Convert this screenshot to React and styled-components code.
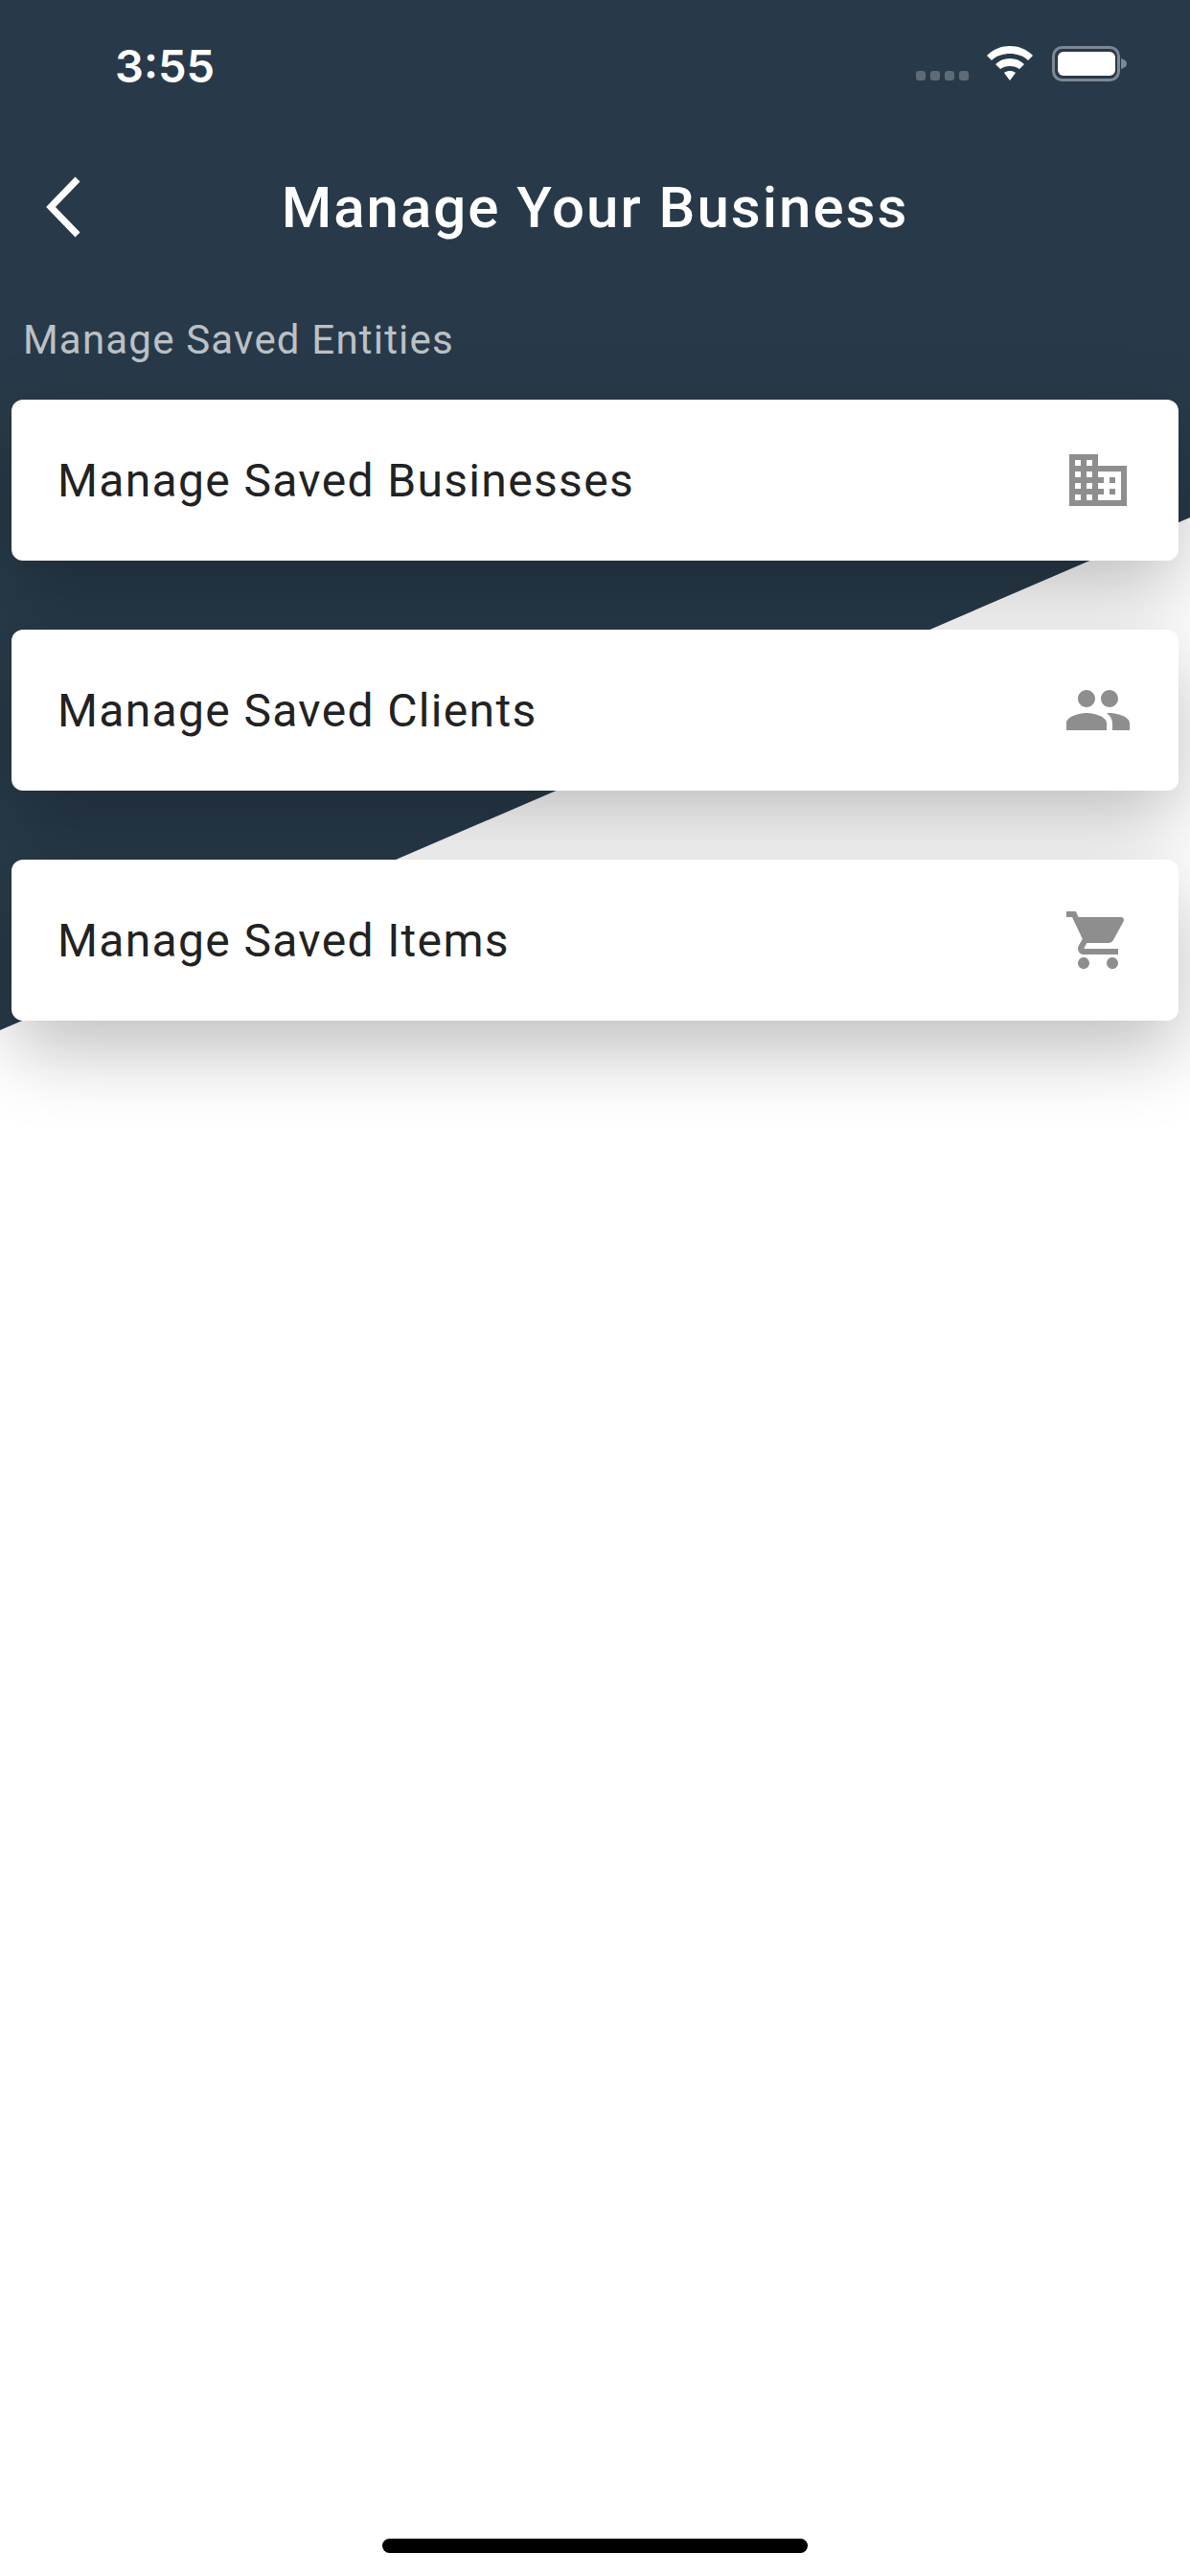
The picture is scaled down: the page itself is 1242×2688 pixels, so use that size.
import React from "react";
import styled, { createGlobalStyle } from "styled-components";
import { MdBusiness, MdPeople, MdShoppingCart } from "react-icons/md";

const GlobalStyle = createGlobalStyle`
  html, body {
    margin: 0;
    padding: 0;
    background: #fff;
  }
`;

const Page = styled.div`
  position: relative;
  width: 1242px;
  height: 2688px;
  overflow: hidden;
  background: #fff;
  font-family: Roboto, "Liberation Sans", sans-serif;

  &::before {
    content: "";
    position: absolute;
    inset: 0;
    background: #283a49;
    clip-path: polygon(0 0, 100% 0, 100% 540px, 0 1075px);
  }
`;

const Content = styled.div`
  position: relative;
  display: flex;
  flex-direction: column;
  height: 100%;
`;

const StatusBar = styled.div`
  display: flex;
  align-items: center;
  justify-content: space-between;
  height: 136px;
  padding: 0 64px 0 120px;
  box-sizing: border-box;
`;

const Time = styled.span`
  font-family: Inter, sans-serif;
  font-size: 47px;
  font-weight: 600;
  color: #fff;
`;

const NavBar = styled.div`
  position: relative;
  display: flex;
  align-items: center;
  justify-content: center;
  height: 160px;
`;

const BackButton = styled.svg`
  position: absolute;
  left: 45px;
  top: 47px;
  width: 42px;
  height: 66px;
`;

const Title = styled.h1`
  margin: 0;
  font-size: 60px;
  font-weight: 500;
  letter-spacing: 2px;
  color: #fff;
`;

const SectionLabel = styled.div`
  padding: 34px 0 0 24px;
  height: 121px;
  box-sizing: border-box;
  font-size: 42px;
  line-height: 50px;
  letter-spacing: 1.2px;
  color: rgba(255, 255, 255, 0.7);
`;

const List = styled.div`
  display: flex;
  flex-direction: column;
  gap: 72px;
  padding: 0 12px;
`;

const Card = styled.div`
  display: flex;
  align-items: center;
  justify-content: space-between;
  height: 168px;
  padding: 0 48px;
  box-sizing: border-box;
  background: #fff;
  border-radius: 12px;
  box-shadow: 0 30px 80px rgba(0, 0, 0, 0.26);
`;

const CardLabel = styled.span`
  font-size: 48px;
  letter-spacing: 1.35px;
  color: #222;
`;

const CardIcon = styled.span`
  display: flex;
  color: #8e8e8e;
  font-size: 72px;
`;

const HomeIndicator = styled.div`
  position: absolute;
  left: 399px;
  bottom: 24px;
  width: 444px;
  height: 15px;
  border-radius: 8px;
  background: #000;
`;

const items = [
  { label: "Manage Saved Businesses", icon: <MdBusiness /> },
  { label: "Manage Saved Clients", icon: <MdPeople /> },
  { label: "Manage Saved Items", icon: <MdShoppingCart /> },
];

const StatusIcons = () => (
  <svg width="222" height="40" viewBox="0 0 222 40">
    <g fill="#fff" fillOpacity="0.25">
      <rect x="0" y="26" width="10" height="10" rx="3" />
      <rect x="15" y="26" width="10" height="10" rx="3" />
      <rect x="30" y="26" width="10" height="10" rx="3" />
      <rect x="45" y="26" width="10" height="10" rx="3" />
    </g>
    <path
      fill="#fff"
      transform="translate(23 0)"
      d="M75 0C84 0 92 3 99 10L94 15C89 10 82 8 75 8C68 8 61 10 56 15L51 10C58 3 66 0 75 0ZM75 13C81 13 86 15 90 19L85 24C82 22 79 21 75 21C71 21 68 22 65 24L60 19C64 15 69 13 75 13ZM75 26C77 26 79 26.500 81 28L75 36L69 28C71 26.500 73 26 75 26Z"
    />
    <rect x="143.5" y="1.5" width="68" height="34" rx="9" fill="none" stroke="#fff" strokeOpacity="0.4" strokeWidth="3" />
    <rect x="148" y="6" width="60" height="25" rx="6" fill="#fff" />
    <path d="M214 13C218 14 220 16 220 18.500C220 21 218 23 214 24Z" fill="#fff" fillOpacity="0.4" />
  </svg>
);

const App = () => {
  return (
    <Page>
      <GlobalStyle />
      <Content>
        <StatusBar>
          <Time>3:55</Time>
          <StatusIcons />
        </StatusBar>
        <NavBar>
          <BackButton viewBox="0 0 42 66">
            <path d="M36 4L8 33L36 62" fill="none" stroke="#fff" strokeWidth="7" />
          </BackButton>
          <Title>Manage Your Business</Title>
        </NavBar>
        <SectionLabel>Manage Saved Entities</SectionLabel>
        <List>
          {items.map((item) => (
            <Card key={item.label}>
              <CardLabel>{item.label}</CardLabel>
              <CardIcon>{item.icon}</CardIcon>
            </Card>
          ))}
        </List>
      </Content>
      <HomeIndicator />
    </Page>
  );
};

export default App;
